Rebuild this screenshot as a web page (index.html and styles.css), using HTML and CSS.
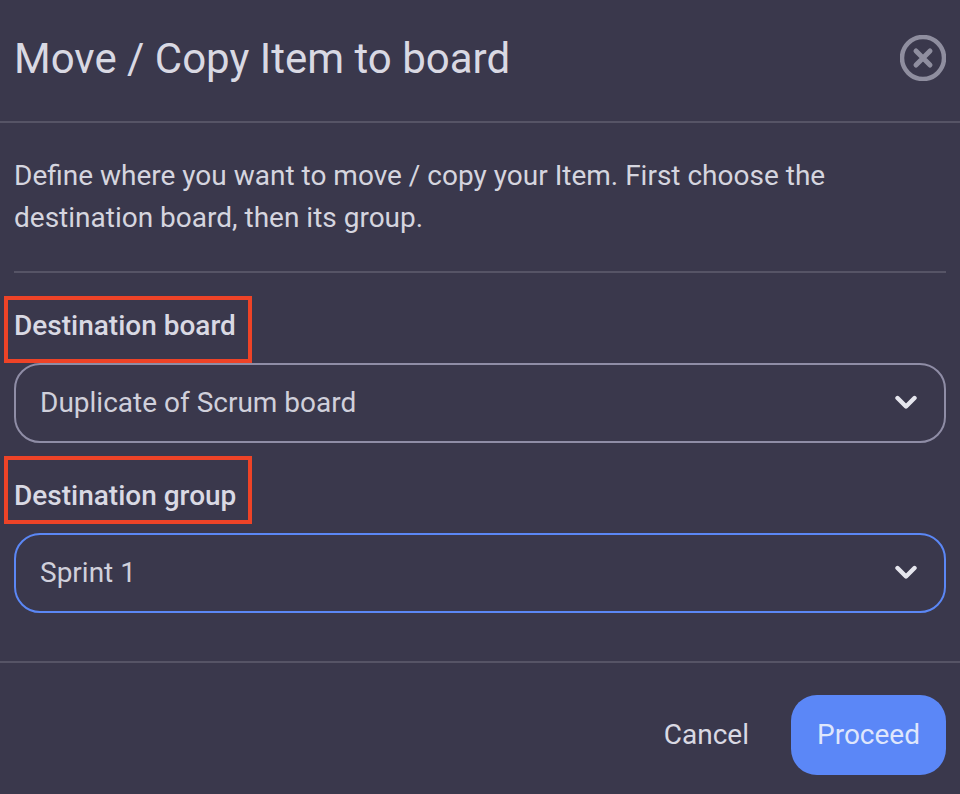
FILE: index.html
```html
<!DOCTYPE html>
<html lang="en">
<head>
<meta charset="utf-8">
<title>Move / Copy Item to board</title>
<link rel="stylesheet" href="styles.css">
</head>
<body>
<div class="dialog">
  <header class="head">
    <h1 class="title">Move / Copy Item to board</h1>
    <svg class="close" viewBox="0 0 46 46" aria-hidden="true"><circle cx="23" cy="23" r="21" fill="none" stroke="#8f8e9f" stroke-width="4.5"/><path d="M16 16 30 30M30 16 16 30" fill="none" stroke="#8f8e9f" stroke-width="5" stroke-linecap="round"/></svg>
  </header>
  <section class="body">
    <p class="intro">Define where you want to move / copy your Item. First choose the destination board, then its group.</p>
    <div class="rule"></div>
    <div class="field first">
      <div class="label"><span class="mark"></span>Destination board</div>
      <div class="select"><span class="value">Duplicate of Scrum board</span>
        <svg class="chev" viewBox="0 0 24 16" aria-hidden="true"><path d="M3.5 3 12 11.5 20.5 3" fill="none" stroke="#e6e6ee" stroke-width="4.4" stroke-linecap="round" stroke-linejoin="round"/></svg>
      </div>
    </div>
    <div class="field">
      <div class="label"><span class="mark low"></span>Destination group</div>
      <div class="select active"><span class="value">Sprint 1</span>
        <svg class="chev" viewBox="0 0 24 16" aria-hidden="true"><path d="M3.5 3 12 11.5 20.5 3" fill="none" stroke="#e6e6ee" stroke-width="4.4" stroke-linecap="round" stroke-linejoin="round"/></svg>
      </div>
    </div>
  </section>
  <footer class="foot">
    <span class="cancel">Cancel</span>
    <span class="proceed">Proceed</span>
  </footer>
</div>
</body>
</html>
```

FILE: styles.css
```css
* { box-sizing: border-box; }
html, body { margin: 0; padding: 0; }
body {
  width: 960px;
  height: 794px;
  overflow: hidden;
  background: #3a384c;
  font-family: Roboto, "Liberation Sans", sans-serif;
  color: #d5d5df;
}
.dialog { display: flex; flex-direction: column; height: 794px; }
.head {
  height: 123px;
  padding: 0 14px;
  display: flex;
  align-items: center;
  justify-content: space-between;
  border-bottom: 2px solid #565466;
}
.title { margin: 0 0 4px; font-size: 42px; line-height: 48px; font-weight: 400; color: #d9d9e3; }
.close { width: 46px; height: 46px; margin: 0 0 6px; }
.body { padding: 32px 14px 0; height: 540px; border-bottom: 2px solid #565466; }
.intro { margin: 0; font-size: 28px; line-height: 42px; color: #d5d5df; }
.rule { height: 2px; background: #565466; margin-top: 32px; }
.field { margin-top: 30px; }
.label { position: relative; font-size: 28px; line-height: 32px; font-weight: 500; color: #d9d9e3; height: 60px; padding-top: 7px; }
.mark { position: absolute; left: -10px; top: -7px; width: 248px; height: 67px; border: 4px solid #ee4327; }
.mark.low { top: -17px; height: 68px; }
.select {
  height: 80px;
  border: 2px solid #8f8da6;
  border-radius: 26px;
  padding: 0 26px 0 24px;
  display: flex;
  align-items: center;
  justify-content: space-between;
  font-size: 28px;
  color: #d0d0db;
}
.value { padding-bottom: 2px; }
.select.active { border-color: #5b87f5; }
.chev { width: 24px; height: 16px; }
.foot { flex: 1; display: flex; justify-content: flex-end; align-items: center; padding: 13px 14px 0 0; gap: 42px; }
.cancel { font-size: 28px; color: #d9d9e3; padding-bottom: 2px; }
.proceed {
  width: 155px;
  height: 80px;
  border-radius: 26px;
  background: #5b87f7;
  color: #dfe6fc;
  font-size: 28px;
  padding-bottom: 2px;
  display: flex;
  align-items: center;
  justify-content: center;
}
```
